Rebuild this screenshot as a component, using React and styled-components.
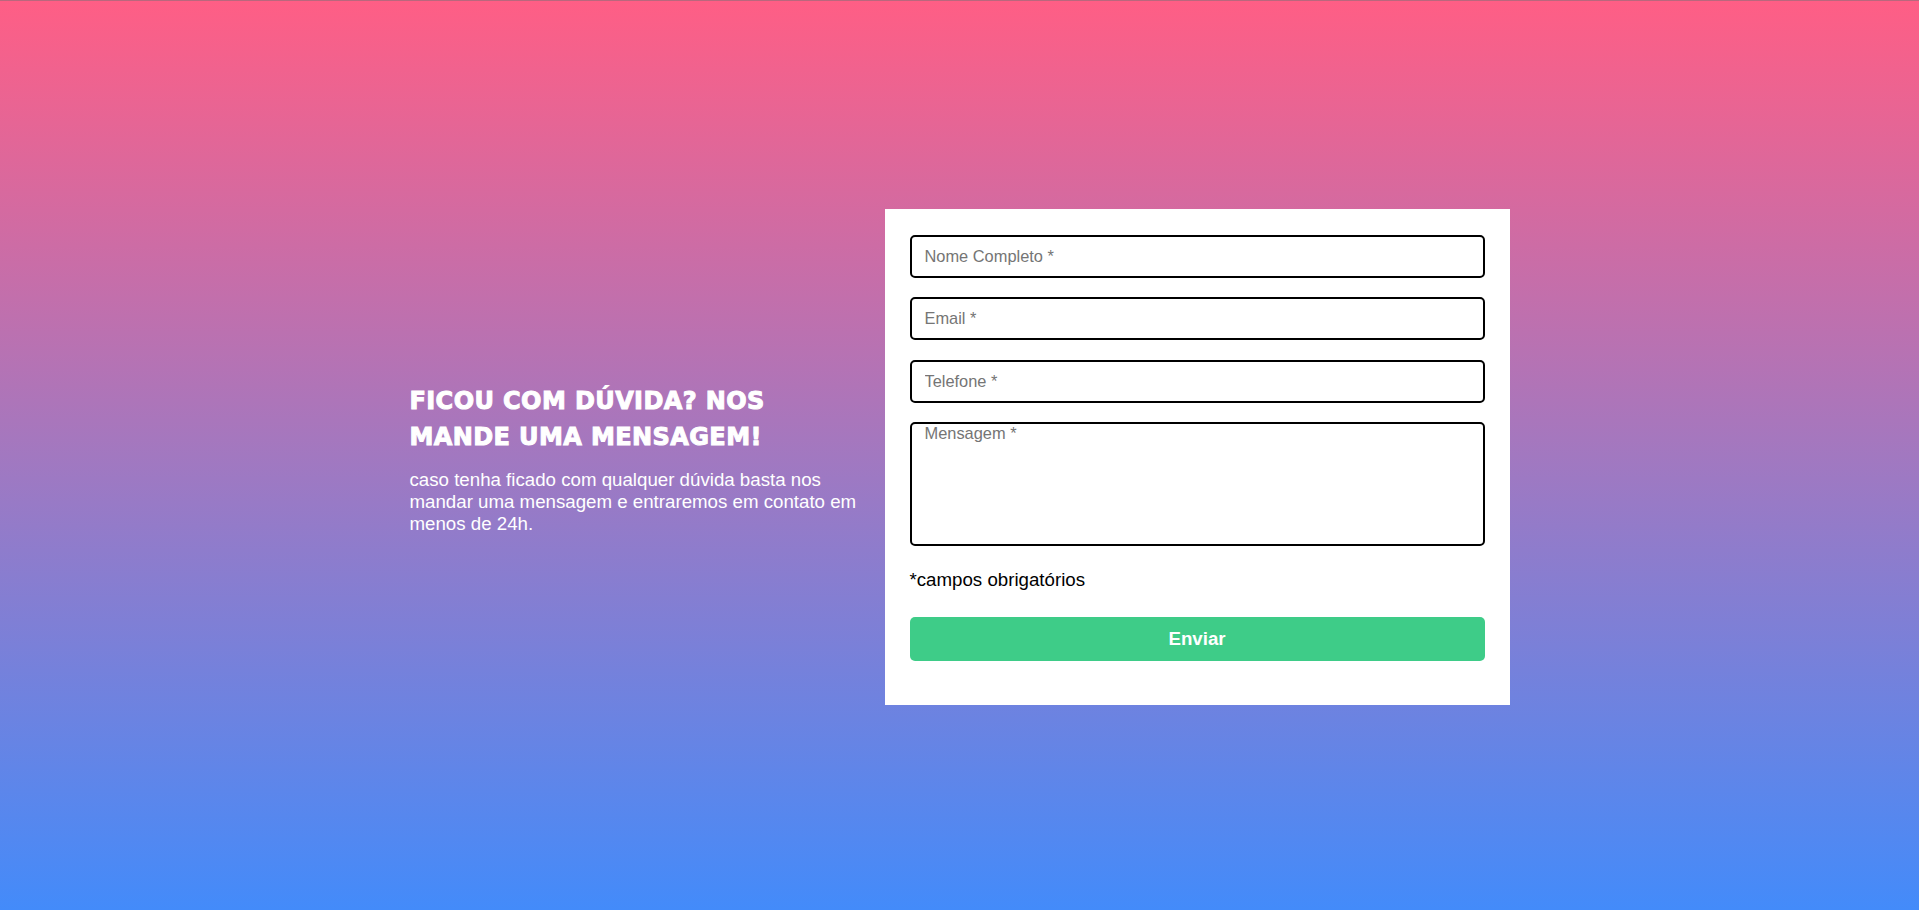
import React from "react";
import styled, { createGlobalStyle } from "styled-components";

const GlobalStyle = createGlobalStyle`
  * {
    box-sizing: border-box;
  }

  body {
    margin: 0;
    font-family: "Liberation Sans", Arial, sans-serif;
  }
`;

const Page = styled.main`
  min-height: 100vh;
  padding-top: 4px;
  display: flex;
  align-items: center;
  justify-content: center;
  background: linear-gradient(180deg, #ff5e85 0%, #a278c0 50%, #438bfa 100%);
  box-shadow: inset 0 1px 0 rgba(140, 110, 120, 0.6);
`;

const Contact = styled.section`
  width: 1100px;
  display: flex;
  align-items: center;
`;

const Intro = styled.div`
  width: 456px;
  margin-right: 19px;
  padding-top: 3px;
  color: #fff;
`;

const Title = styled.h2`
  margin: 0 0 14px;
  font-family: "DejaVu Sans", "Liberation Sans", sans-serif;
  font-size: 24px;
  font-weight: 700;
  line-height: 36px;
  letter-spacing: 0.4px;
  -webkit-text-stroke: 1px #fff;
  text-transform: uppercase;
`;

const Text = styled.p`
  margin: 0;
  font-size: 18.7px;
`;

const Form = styled.form`
  width: 625px;
  padding: 25.5px 25px 44.5px;
  background: #fff;
  display: flex;
  flex-direction: column;
`;

const Field = styled.input`
  width: 100%;
  height: 43px;
  margin-bottom: 19.5px;
  padding: 0 13px;
  border: 2px solid #000;
  border-radius: 5px;
  font-family: "Liberation Sans", Arial, sans-serif;
  font-size: 16.4px;
  color: #222;
  outline: none;

  &::placeholder {
    color: #757575;
  }
`;

const Message = styled.textarea`
  width: 100%;
  height: 124px;
  padding: 0 13px;
  border: 2px solid #000;
  border-radius: 5px;
  font-family: "Liberation Sans", Arial, sans-serif;
  font-size: 16.4px;
  color: #222;
  outline: none;
  resize: none;

  &::placeholder {
    color: #757575;
  }
`;

const Required = styled.p`
  margin: 22.5px 0 26px;
  font-size: 18.7px;
  color: #000;
`;

const SendBtn = styled.button`
  width: 100%;
  height: 44px;
  border: none;
  border-radius: 5px;
  background: #3ecc88;
  color: #fff;
  font-family: "Liberation Sans", Arial, sans-serif;
  font-size: 18.7px;
  font-weight: bold;
  cursor: pointer;
  transition: background 0.2s ease;

  &:hover {
    background: #35b978;
  }
`;

const App = () => {
  return (
    <>
      <GlobalStyle />
      <Page>
        <Contact>
          <Intro>
            <Title>Ficou com dúvida? Nos mande uma mensagem!</Title>
            <Text>
              caso tenha ficado com qualquer dúvida basta nos mandar uma
              mensagem e entraremos em contato em menos de 24h.
            </Text>
          </Intro>

          <Form onSubmit={e => e.preventDefault()}>
            <Field name="name" type="text" placeholder="Nome Completo *" />
            <Field name="email" type="email" placeholder="Email *" />
            <Field name="phone" type="tel" placeholder="Telefone *" />
            <Message name="message" placeholder="Mensagem *" />
            <Required>*campos obrigatórios</Required>
            <SendBtn type="submit">Enviar</SendBtn>
          </Form>
        </Contact>
      </Page>
    </>
  );
};

export default App;
